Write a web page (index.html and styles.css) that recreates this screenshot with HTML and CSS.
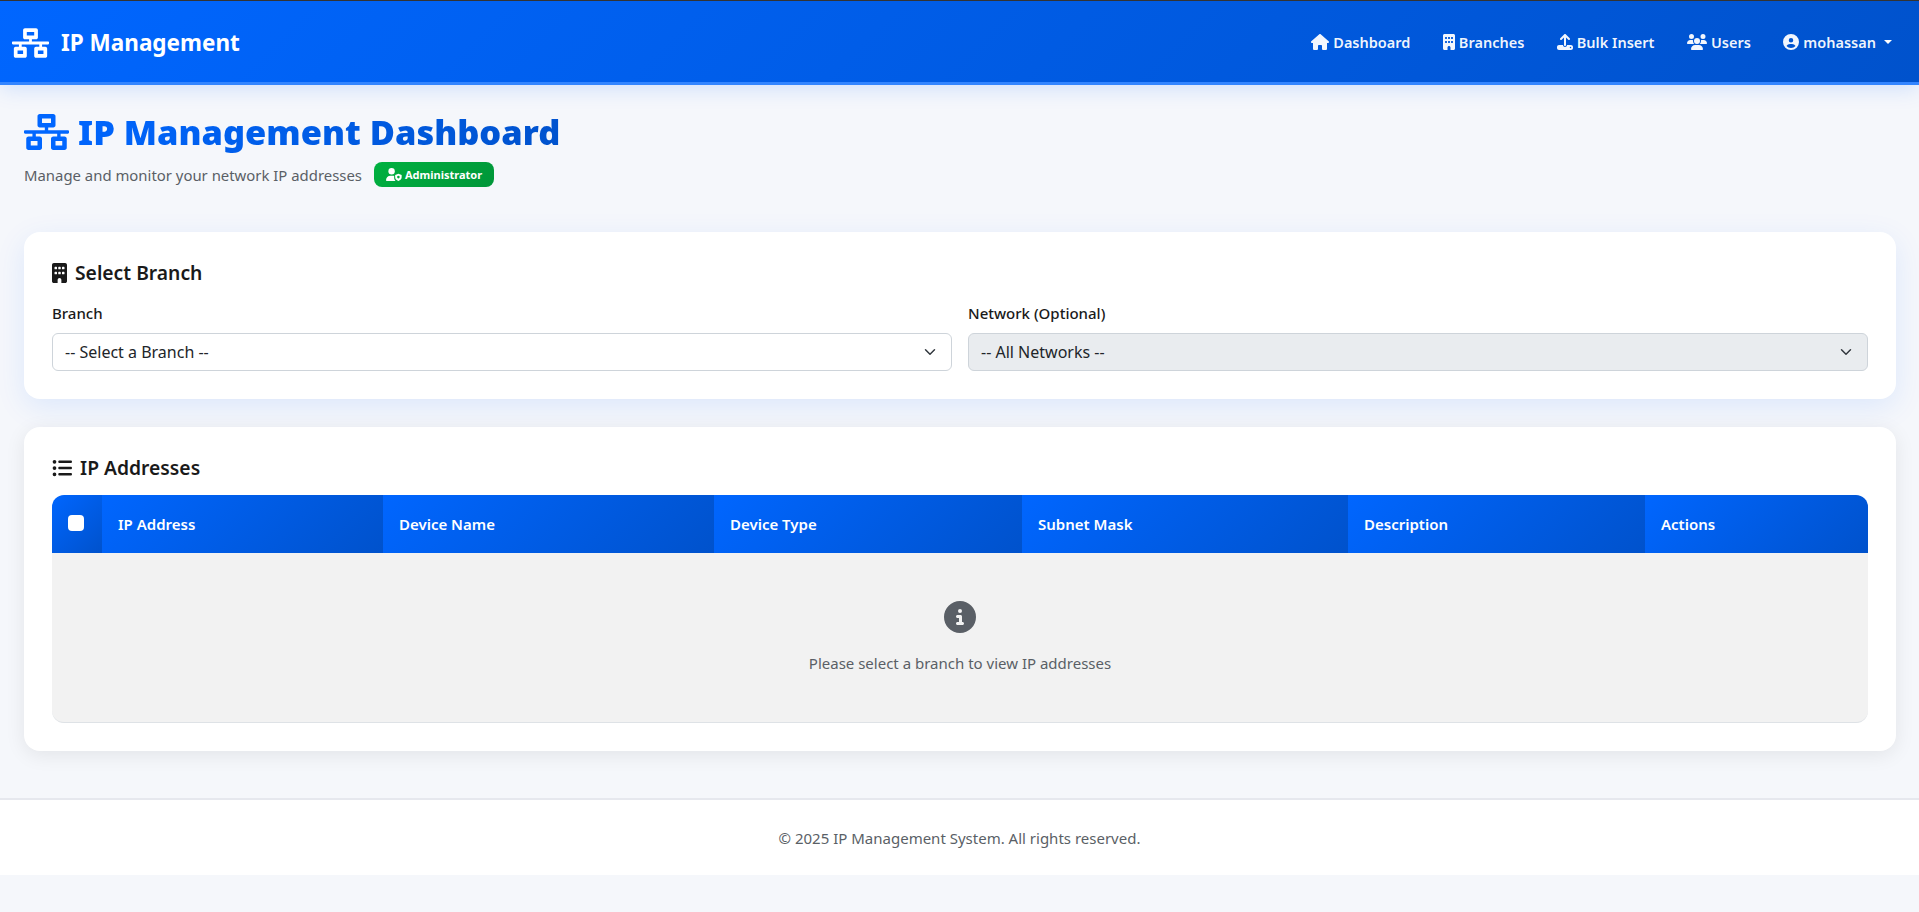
FILE: index.html
```html
<!DOCTYPE html>
<html lang="en">
<head>
    <meta charset="UTF-8">
    <meta name="viewport" content="width=device-width, initial-scale=1.0">
    <title>IP Management Dashboard</title>
    <link rel="stylesheet" href="styles.css">
</head>
<body>
    <nav class="navbar">
        <a class="brand" href="#">
            <svg class="brand-icon" viewBox="0 0 640 512"><path d="M640 264v-16c0-8.84-7.16-16-16-16H344v-40h72c17.67 0 32-14.33 32-32V32c0-17.67-14.33-32-32-32H224c-17.67 0-32 14.33-32 32v128c0 17.67 14.33 32 32 32h72v40H16c-8.84 0-16 7.16-16 16v16c0 8.84 7.16 16 16 16h104v40H64c-17.67 0-32 14.33-32 32v128c0 17.67 14.33 32 32 32h160c17.67 0 32-14.33 32-32V352c0-17.67-14.33-32-32-32h-56v-40h304v40h-56c-17.67 0-32 14.33-32 32v128c0 17.67 14.33 32 32 32h160c17.67 0 32-14.33 32-32V352c0-17.67-14.33-32-32-32h-56v-40h104c8.84 0 16-7.16 16-16zM256 128V64h128v64H256zm-64 320H96v-64h96v64zm352 0h-96v-64h96v64z"/></svg>
            <span>IP Management</span>
        </a>
        <div class="nav-links">
            <a href="#">
                <svg viewBox="0 0 576 512"><path d="M575.8 255.5c0 18-15 32.1-32 32.1h-32l.7 160.2c0 2.7-.2 5.4-.5 8.1V472c0 22.1-17.9 40-40 40H456c-1.1 0-2.2 0-3.3-.1c-1.4 .1-2.8 .1-4.2 .1H416 392c-22.1 0-40-17.9-40-40V448 384c0-17.7-14.3-32-32-32H256c-17.7 0-32 14.3-32 32v64 24c0 22.1-17.9 40-40 40H160 128.1c-1.5 0-3-.1-4.5-.2c-1.2 .1-2.4 .2-3.6 .2H104c-22.1 0-40-17.9-40-40V360c0-.9 0-1.9 .1-2.8V287.6H32c-18 0-32-14-32-32.1c0-9 3-17 10-24L266.4 8c7-7 15-8 22-8s15 2 21 7L564.8 231.5c8 7 12 15 11 24z"/></svg>
                Dashboard
            </a>
            <a href="#">
                <svg viewBox="0 0 384 512"><path d="M48 0C21.5 0 0 21.5 0 48V464c0 26.5 21.5 48 48 48h96V432c0-26.5 21.5-48 48-48s48 21.5 48 48v80h96c26.5 0 48-21.5 48-48V48c0-26.5-21.5-48-48-48H48zM64 240c0-8.8 7.2-16 16-16h32c8.8 0 16 7.2 16 16v32c0 8.8-7.2 16-16 16H80c-8.8 0-16-7.2-16-16V240zm112-16h32c8.8 0 16 7.2 16 16v32c0 8.8-7.2 16-16 16H176c-8.8 0-16-7.2-16-16V240c0-8.8 7.2-16 16-16zm80 16c0-8.8 7.2-16 16-16h32c8.8 0 16 7.2 16 16v32c0 8.8-7.2 16-16 16H272c-8.8 0-16-7.2-16-16V240zM80 96h32c8.8 0 16 7.2 16 16v32c0 8.8-7.2 16-16 16H80c-8.8 0-16-7.2-16-16V112c0-8.8 7.2-16 16-16zm80 16c0-8.8 7.2-16 16-16h32c8.8 0 16 7.2 16 16v32c0 8.8-7.2 16-16 16H176c-8.8 0-16-7.2-16-16V112zM272 96h32c8.8 0 16 7.2 16 16v32c0 8.8-7.2 16-16 16H272c-8.8 0-16-7.2-16-16V112c0-8.8 7.2-16 16-16z"/></svg>
                Branches
            </a>
            <a href="#">
                <svg viewBox="0 0 512 512"><path d="M288 109.3V352c0 17.7-14.3 32-32 32s-32-14.3-32-32V109.3l-73.4 73.4c-12.5 12.5-32.8 12.5-45.3 0s-12.5-32.8 0-45.3l128-128c12.5-12.5 32.8-12.5 45.3 0l128 128c12.5 12.5 12.5 32.8 0 45.3s-32.8 12.5-45.3 0L288 109.3zM64 352H192c0 35.3 28.7 64 64 64s64-28.7 64-64H448c35.3 0 64 28.7 64 64v32c0 35.3-28.7 64-64 64H64c-35.3 0-64-28.7-64-64V416c0-35.3 28.7-64 64-64zM432 456a24 24 0 1 0 0-48 24 24 0 1 0 0 48z"/></svg>
                Bulk Insert
            </a>
            <a href="#">
                <svg viewBox="0 0 640 512"><path d="M144 0a80 80 0 1 1 0 160A80 80 0 1 1 144 0zM512 0a80 80 0 1 1 0 160A80 80 0 1 1 512 0zM0 298.7C0 239.8 47.8 192 106.7 192h42.7c15.9 0 31 3.5 44.6 9.7c-1.3 7.2-1.9 14.7-1.9 22.3c0 38.2 16.8 72.5 43.3 96c-.2 0-.4 0-.7 0H21.3C9.6 320 0 310.4 0 298.7zM405.3 320c-.2 0-.4 0-.7 0c26.6-23.5 43.3-57.8 43.3-96c0-7.6-.7-15-1.9-22.3c13.6-6.3 28.7-9.7 44.6-9.7h42.7C592.2 192 640 239.8 640 298.7c0 11.8-9.6 21.3-21.3 21.3H405.3zM224 224a96 96 0 1 1 192 0 96 96 0 1 1 -192 0zM128 485.3C128 411.7 187.7 352 261.3 352H378.7C452.3 352 512 411.7 512 485.3c0 14.7-11.9 26.7-26.7 26.7H154.7c-14.7 0-26.7-11.9-26.7-26.7z"/></svg>
                Users
            </a>
            <a href="#">
                <svg viewBox="0 0 512 512"><path d="M399 384.2C376.9 345.8 335.4 320 288 320H224c-47.4 0-88.9 25.8-111 64.2c35.2 39.2 86.2 63.8 143 63.8s107.8-24.7 143-63.8zM0 256a256 256 0 1 1 512 0A256 256 0 1 1 0 256zm256 16a72 72 0 1 0 0-144 72 72 0 1 0 0 144z"/></svg>
                mohassan
                <span class="caret"></span>
            </a>
        </div>
    </nav>

    <main class="page">
        <div class="page-head">
            <h1>
                <svg viewBox="0 0 640 512"><path d="M640 264v-16c0-8.84-7.16-16-16-16H344v-40h72c17.67 0 32-14.33 32-32V32c0-17.67-14.33-32-32-32H224c-17.67 0-32 14.33-32 32v128c0 17.67 14.33 32 32 32h72v40H16c-8.84 0-16 7.16-16 16v16c0 8.84 7.16 16 16 16h104v40H64c-17.67 0-32 14.33-32 32v128c0 17.67 14.33 32 32 32h160c17.67 0 32-14.33 32-32V352c0-17.67-14.33-32-32-32h-56v-40h304v40h-56c-17.67 0-32 14.33-32 32v128c0 17.67 14.33 32 32 32h160c17.67 0 32-14.33 32-32V352c0-17.67-14.33-32-32-32h-56v-40h104c8.84 0 16-7.16 16-16zM256 128V64h128v64H256zm-64 320H96v-64h96v64zm352 0h-96v-64h96v64z"/></svg>
                <span class="title-text">IP Management Dashboard</span>
            </h1>
            <div class="subtitle">
                <span>Manage and monitor your network IP addresses</span>
                <span class="role-badge">
                    <svg viewBox="0 0 640 512"><circle cx="224" cy="128" r="128"/><path d="M178 304h90c20 0 40 4 58 11v70c0 50 20 92 56 127H30c-16 0-30-13-30-30c0-98 80-178 178-178z"/><path fill-rule="evenodd" d="M496 224l130 52v90c0 70-50 120-130 146c-80-26-130-76-130-146v-90zm0 84a52 52 0 1 0 0 104a52 52 0 1 0 0-104z"/></svg>
                    Administrator
                </span>
            </div>
        </div>

        <section class="card card-branch">
            <h2>
                <svg viewBox="0 0 384 512"><path d="M48 0C21.5 0 0 21.5 0 48V464c0 26.5 21.5 48 48 48h96V432c0-26.5 21.5-48 48-48s48 21.5 48 48v80h96c26.5 0 48-21.5 48-48V48c0-26.5-21.5-48-48-48H48zM64 240c0-8.8 7.2-16 16-16h32c8.8 0 16 7.2 16 16v32c0 8.8-7.2 16-16 16H80c-8.8 0-16-7.2-16-16V240zm112-16h32c8.8 0 16 7.2 16 16v32c0 8.8-7.2 16-16 16H176c-8.8 0-16-7.2-16-16V240c0-8.8 7.2-16 16-16zm80 16c0-8.8 7.2-16 16-16h32c8.8 0 16 7.2 16 16v32c0 8.8-7.2 16-16 16H272c-8.8 0-16-7.2-16-16V240zM80 96h32c8.8 0 16 7.2 16 16v32c0 8.8-7.2 16-16 16H80c-8.8 0-16-7.2-16-16V112c0-8.8 7.2-16 16-16zm80 16c0-8.8 7.2-16 16-16h32c8.8 0 16 7.2 16 16v32c0 8.8-7.2 16-16 16H176c-8.8 0-16-7.2-16-16V112zM272 96h32c8.8 0 16 7.2 16 16v32c0 8.8-7.2 16-16 16H272c-8.8 0-16-7.2-16-16V112c0-8.8 7.2-16 16-16z"/></svg>
                Select Branch
            </h2>
            <div class="form-row">
                <div>
                    <label for="branch">Branch</label>
                    <select id="branch">
                        <option>-- Select a Branch --</option>
                    </select>
                </div>
                <div>
                    <label for="network">Network (Optional)</label>
                    <select id="network" disabled>
                        <option>-- All Networks --</option>
                    </select>
                </div>
            </div>
        </section>

        <section class="card card-ips">
            <h2>
                <svg viewBox="0 0 512 512"><path d="M64 144a48 48 0 1 0 0-96 48 48 0 1 0 0 96zM192 64c-17.7 0-32 14.3-32 32s14.3 32 32 32H480c17.7 0 32-14.3 32-32s-14.3-32-32-32H192zm0 160c-17.7 0-32 14.3-32 32s14.3 32 32 32H480c17.7 0 32-14.3 32-32s-14.3-32-32-32H192zm0 160c-17.7 0-32 14.3-32 32s14.3 32 32 32H480c17.7 0 32-14.3 32-32s-14.3-32-32-32H192zM64 464a48 48 0 1 0 0-96 48 48 0 1 0 0 96zm48-208a48 48 0 1 0 -96 0 48 48 0 1 0 96 0z"/></svg>
                IP Addresses
            </h2>
            <table class="ip-table">
                <thead>
                    <tr>
                        <th class="col-check"><input type="checkbox"></th>
                        <th class="col-ip">IP Address</th>
                        <th class="col-name">Device Name</th>
                        <th class="col-type">Device Type</th>
                        <th class="col-mask">Subnet Mask</th>
                        <th class="col-desc">Description</th>
                        <th class="col-actions">Actions</th>
                    </tr>
                </thead>
                <tbody>
                    <tr>
                        <td class="empty" colspan="7">
                            <svg viewBox="0 0 512 512"><path d="M256 512A256 256 0 1 0 256 0a256 256 0 1 0 0 512zM216 336h24V272H216c-13.3 0-24-10.7-24-24s10.7-24 24-24h48c13.3 0 24 10.7 24 24v88h8c13.3 0 24 10.7 24 24s-10.7 24-24 24H216c-13.3 0-24-10.7-24-24s10.7-24 24-24zm40-208a32 32 0 1 1 0 64 32 32 0 1 1 0-64z"/></svg>
                            <p>Please select a branch to view IP addresses</p>
                        </td>
                    </tr>
                </tbody>
            </table>
        </section>
    </main>

    <footer class="footer">&copy; 2025 IP Management System. All rights reserved.</footer>
</body>
</html>
```

FILE: styles.css
```css
* {
    box-sizing: border-box;
}
body {
    margin: 0;
    font-family: "Noto Sans", "Open Sans", sans-serif;
    font-size: 15px;
    color: #212529;
    background: #f5f7fb;
}
svg {
    fill: currentColor;
    flex: none;
}

/* navbar */
.navbar {
    display: flex;
    justify-content: space-between;
    align-items: center;
    height: 85px;
    padding: 0 27px 0 12px;
    border-top: 1px solid #333;
    border-bottom: 3px solid #3385ff;
    background: linear-gradient(135deg, #0066ff 0%, #0052cc 100%);
    box-shadow: 0 4px 20px rgba(0, 102, 255, 0.15);
    position: relative;
}
.brand {
    display: flex;
    align-items: center;
    gap: 12px;
    padding-top: 2px;
    color: #fff;
    text-decoration: none;
    font-size: 22.5px;
    font-weight: 700;
}
.brand-icon {
    width: 37px;
    height: 30px;
}
.nav-links {
    display: flex;
    align-items: center;
    gap: 32.5px;
}
.nav-links a {
    display: flex;
    align-items: center;
    gap: 4px;
    color: rgba(255, 255, 255, 0.95);
    text-decoration: none;
    font-size: 14.5px;
    font-weight: 600;
}
.nav-links svg {
    height: 16px;
    width: auto;
}
.caret {
    width: 0;
    height: 0;
    margin-left: 4px;
    border-top: 4px solid #fff;
    border-left: 4px solid transparent;
    border-right: 4px solid transparent;
}

/* page */
.page {
    padding: 23px 23px 47px 24px;
}
.page-head {
    margin-bottom: 45px;
}
h1 {
    display: flex;
    align-items: center;
    gap: 9px;
    margin: 0 0 6px;
    font-size: 34.4px;
    line-height: 48px;
    font-weight: 900;
    color: #0066ff;
}
h1 svg {
    width: 45px;
    height: 36px;
}
.title-text {
    background: linear-gradient(135deg, #0066ff 0%, #0052cc 100%);
    -webkit-background-clip: text;
    background-clip: text;
    color: transparent;
}
.subtitle {
    display: flex;
    align-items: center;
    gap: 12px;
    color: #5a5f66;
    font-size: 14.9px;
}
.role-badge {
    display: flex;
    align-items: center;
    gap: 3px;
    height: 25px;
    padding: 0 12px;
    border-radius: 8px;
    background: linear-gradient(135deg, #00b140 0%, #009639 100%);
    color: #fff;
    font-size: 11px;
    font-weight: 700;
}
.role-badge svg {
    width: 16px;
    height: 13px;
}

/* cards */
.card {
    padding: 28px;
    background: #fff;
    border-radius: 16px;
}
.card-branch {
    height: 167px;
    margin-bottom: 28px;
    box-shadow: 0 8px 30px rgba(0, 102, 255, 0.1);
}
.card-branch h2 {
    margin-bottom: 17px;
}
.card-ips {
    box-shadow: 0 4px 20px rgba(0, 0, 0, 0.08);
}
h2 {
    display: flex;
    align-items: center;
    gap: 8px;
    margin: 0 0 14px;
    font-size: 19.3px;
    line-height: 26px;
    font-weight: 600;
    color: #1a1a1a;
}
h2 svg {
    height: 20px;
    width: auto;
}
.form-row {
    display: grid;
    grid-template-columns: 1fr 1fr;
    gap: 16px;
}
label {
    display: block;
    margin-bottom: 10px;
    font-weight: 500;
    line-height: 20px;
    color: #1a1a1a;
}
select {
    display: block;
    width: 100%;
    height: 38px;
    padding: 0 36px 0 12px;
    font: inherit;
    font-size: 16px;
    color: #212529;
    background: #fff url("data:image/svg+xml,%3csvg xmlns='http://www.w3.org/2000/svg' viewBox='0 0 16 16'%3e%3cpath fill='none' stroke='%23343a40' stroke-linecap='round' stroke-linejoin='round' stroke-width='2' d='m2 5 6 6 6-6'/%3e%3c/svg%3e") no-repeat right 13px center / 16px 12px;
    border: 1px solid #ced4da;
    border-radius: 6px;
    appearance: none;
}
select:disabled {
    background-color: #e9ecef;
    opacity: 1;
}

/* table */
.ip-table {
    width: 100%;
    table-layout: fixed;
    border-collapse: separate;
    border-spacing: 0;
}
.ip-table th {
    height: 58px;
    padding: 0 16px;
    text-align: left;
    font-weight: 600;
    color: #fff;
    background: linear-gradient(135deg, #0066ff 0%, #0052cc 100%);
}
.ip-table th:first-child {
    border-top-left-radius: 12px;
}
.ip-table th:last-child {
    border-top-right-radius: 12px;
}
.col-check { width: 50px; }
.col-ip { width: 281px; }
.col-name { width: 331px; }
.col-type { width: 308px; }
.col-mask { width: 326px; }
.col-desc { width: 297px; }
.ip-table input {
    display: block;
    width: 16px;
    height: 16px;
    margin: -2px 0 0;
    background: #fff;
    border-radius: 4px;
    appearance: none;
}
.empty {
    height: 170px;
    padding: 0 0 2px;
    text-align: center;
    color: #5a5f66;
    background: #f2f2f2;
    border-bottom: 1px solid #dee2e6;
    border-radius: 0 0 12px 12px;
}
.empty svg {
    display: block;
    width: 32px;
    height: 32px;
    margin: 0 auto 20px;
}
.empty p {
    margin: 0;
}

.footer {
    height: 77px;
    display: flex;
    align-items: center;
    justify-content: center;
    background: #fff;
    border-top: 2px solid #e6e8ee;
    color: #5a5f66;
}
```
